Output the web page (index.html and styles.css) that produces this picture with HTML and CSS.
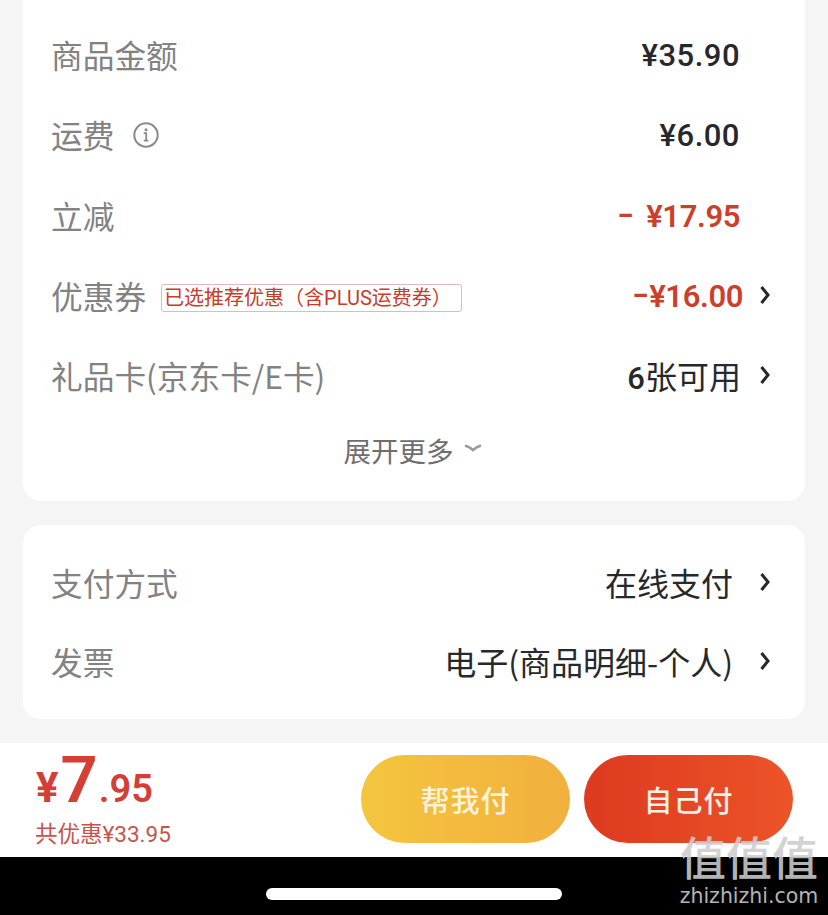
FILE: index.html
```html
<!DOCTYPE html>
<html lang="zh-CN">
<head>
    <meta charset="UTF-8">
    <meta name="viewport" content="width=device-width, initial-scale=1.0">
    <title>确认订单</title>
    <link rel="stylesheet" href="styles.css">
</head>
<body>
    <div class="page">
        <!-- 金额明细 -->
        <section class="card card-price">
            <div class="row">
                <span class="label">商品金额</span>
                <span class="value num">¥35.90</span>
            </div>
            <div class="row">
                <span class="label">运费
                    <svg class="info" viewBox="0 0 26 26" width="26" height="26">
                        <circle cx="13" cy="13" r="11.7" fill="none" stroke="#8a8a8a" stroke-width="2"/>
                        <circle cx="13" cy="7.8" r="1.5" fill="#8a8a8a"/>
                        <path d="M10.8 11.2H13.2V18.6M10.8 18.6H15.4" fill="none" stroke="#8a8a8a" stroke-width="1.8"/>
                    </svg>
                </span>
                <span class="value num">¥6.00</span>
            </div>
            <div class="row">
                <span class="label">立减</span>
                <span class="value num red"><span class="minus minus-gap">-</span>¥17.95</span>
            </div>
            <div class="row">
                <span class="label">优惠券<span class="tag">已选推荐优惠（含PLUS运费券）</span></span>
                <span class="value num red coupon"><span class="minus">-</span>¥16.00</span>
                <svg class="arrow" viewBox="0 0 12 20" width="12" height="20"><path d="M2.5 2L9 10L2.5 18" fill="none" stroke="#26282c" stroke-width="3"/></svg>
            </div>
            <div class="row">
                <span class="label">礼品卡(京东卡/E卡)</span>
                <span class="value with-arrow"><b class="num">6</b>张可用</span>
                <svg class="arrow" viewBox="0 0 12 20" width="12" height="20"><path d="M2.5 2L9 10L2.5 18" fill="none" stroke="#26282c" stroke-width="3"/></svg>
            </div>
            <div class="more">展开更多
                <svg viewBox="0 0 20 10" width="20" height="10"><path d="M2 2.5Q7 4 10 7Q13 4 18 2.5" fill="none" stroke="#9a9a9a" stroke-width="2.6"/></svg>
            </div>
        </section>

        <!-- 支付与发票 -->
        <section class="card card-pay">
            <div class="row">
                <span class="label">支付方式</span>
                <span class="value pay-value">在线支付</span>
                <svg class="arrow" viewBox="0 0 12 20" width="12" height="20"><path d="M2.5 2L9 10L2.5 18" fill="none" stroke="#26282c" stroke-width="3"/></svg>
            </div>
            <div class="row">
                <span class="label">发票</span>
                <span class="value pay-value">电子(商品明细-个人)</span>
                <svg class="arrow" viewBox="0 0 12 20" width="12" height="20"><path d="M2.5 2L9 10L2.5 18" fill="none" stroke="#26282c" stroke-width="3"/></svg>
            </div>
        </section>
    </div>

    <footer class="bar">
        <div class="total">
            <div class="total-price"><span class="yen">¥</span><span class="big">7</span><span class="cents">.95</span></div>
            <div class="saved">共优惠¥33.95</div>
        </div>
        <button class="btn btn-help">帮我付</button>
        <button class="btn btn-self">自己付</button>
    </footer>

    <div class="home"><span class="home-line"></span></div>

    <div class="mark">
        <div class="mark-top">值值值</div>
        <div class="mark-url">zhizhizhi.com</div>
    </div>
</body>
</html>
```

FILE: styles.css
```css
* {
    box-sizing: border-box;
}
html, body {
    margin: 0;
    height: 100%;
}
body {
    position: relative;
    display: flex;
    flex-direction: column;
    height: 915px;
    overflow: hidden;
    background-color: #f5f5f5;
    font-family: "Noto Sans CJK SC", "Noto Sans", sans-serif;
}
.page {
    flex: 1;
    padding: 0 23px;
}
.card {
    background: #fff;
    border-radius: 18px;
    padding: 0 29px 0 28px;
}
.card-price {
    margin-top: -18px;
    height: 519px;
    padding-top: 32px;
}
.card-pay {
    margin-top: 24px;
    height: 194px;
    padding-top: 17px;
}
.row {
    display: flex;
    align-items: center;
    height: 80.3px;
}
.card-pay .row {
    height: 79px;
}
.label {
    display: flex;
    align-items: center;
    flex: 1;
    font-size: 31.7px;
    color: #828282;
    white-space: nowrap;
}
.info {
    margin-left: 19px;
    margin-top: 1px;
}
.tag {
    margin-top: 5px;
    margin-left: 15px;
    height: 28px;
    padding: 0 9px 0 2px;
    border: 1px solid #e2b9b3;
    border-radius: 3px;
    font-family: Roboto, "Noto Sans CJK SC", sans-serif;
    font-size: 20px;
    line-height: 26px;
    color: #c73c2a;
}
.value {
    font-size: 32px;
    color: #26282c;
    margin-right: 36px;
    white-space: nowrap;
}
.num {
    font-family: Roboto, "Noto Sans", sans-serif;
    font-weight: 500;
    font-size: 31px;
}
.value.num {
    padding-top: 3px;
    letter-spacing: 0.5px;
}
.value.red {
    color: #cc3f2b;
    font-weight: 600;
    letter-spacing: -0.4px;
}
.minus {
    display: inline-block;
    margin: 0 3px 0 3px;
    transform: translateY(-2px) scaleX(1.5);
}
.minus-gap {
    margin-right: 15px;
}
.with-arrow {
    margin-right: 18px;
}
.value.coupon {
    margin-right: 16px;
}
.pay-value {
    margin-right: 26px;
}
.arrow {
    margin-right: 5px;
    flex: none;
}
.more {
    display: flex;
    align-items: center;
    justify-content: center;
    gap: 9px;
    margin-top: 15px;
    padding-right: 1px;
    font-size: 27.5px;
    color: #6e6e6e;
}
.more svg {
    margin-top: -4px;
}
.bar {
    display: flex;
    align-items: center;
    height: 114px;
    padding: 0 35px 2px 35px;
    background: #fff;
}
.total {
    flex: 1;
}
.total-price {
    display: flex;
    align-items: baseline;
    height: 70px;
    padding-left: 1px;
    font-family: Roboto, "Noto Sans", sans-serif;
    font-weight: 600;
    color: #d33f35;
}
.yen {
    font-size: 42px;
    font-weight: 700;
}
.big {
    font-size: 65px;
    margin-left: 2px;
    line-height: 58px;
}
.cents {
    font-size: 38px;
    margin-left: 1px;
}
.saved {
    font-family: Roboto, "Noto Sans CJK SC", sans-serif;
    font-size: 22.5px;
    line-height: 26px;
    color: #c9534a;
}
.btn {
    width: 209px;
    height: 88px;
    border: none;
    border-radius: 44px;
    font-family: inherit;
    font-size: 29px;
    font-weight: 500;
    letter-spacing: 1px;
}
.btn-help {
    margin-right: 14px;
    background: linear-gradient(90deg, #f4c53f, #f2b03e);
    color: #fdf3dc;
}
.btn-self {
    background: linear-gradient(90deg, #dd3a20, #ec5428);
    color: #fdf0e8;
}
.home {
    display: flex;
    justify-content: center;
    height: 58px;
    padding-top: 31px;
    background: #000;
}
.home-line {
    width: 296px;
    height: 12px;
    border-radius: 6px;
    background: #fff;
}
/* 右下角水印 */
.mark {
    position: absolute;
    right: 9px;
    bottom: 6px;
    width: 140px;
    text-align: center;
    pointer-events: none;
}
.mark-top {
    margin-bottom: 4px;
    font-size: 46px;
    line-height: 48px;
    font-weight: 500;
    white-space: nowrap;
    color: rgba(205, 205, 205, 0.9);
}
.mark-url {
    font-family: "DejaVu Sans", sans-serif;
    font-size: 20.5px;
    line-height: 26px;
    white-space: nowrap;
    color: #b4b4b4;
}
```
